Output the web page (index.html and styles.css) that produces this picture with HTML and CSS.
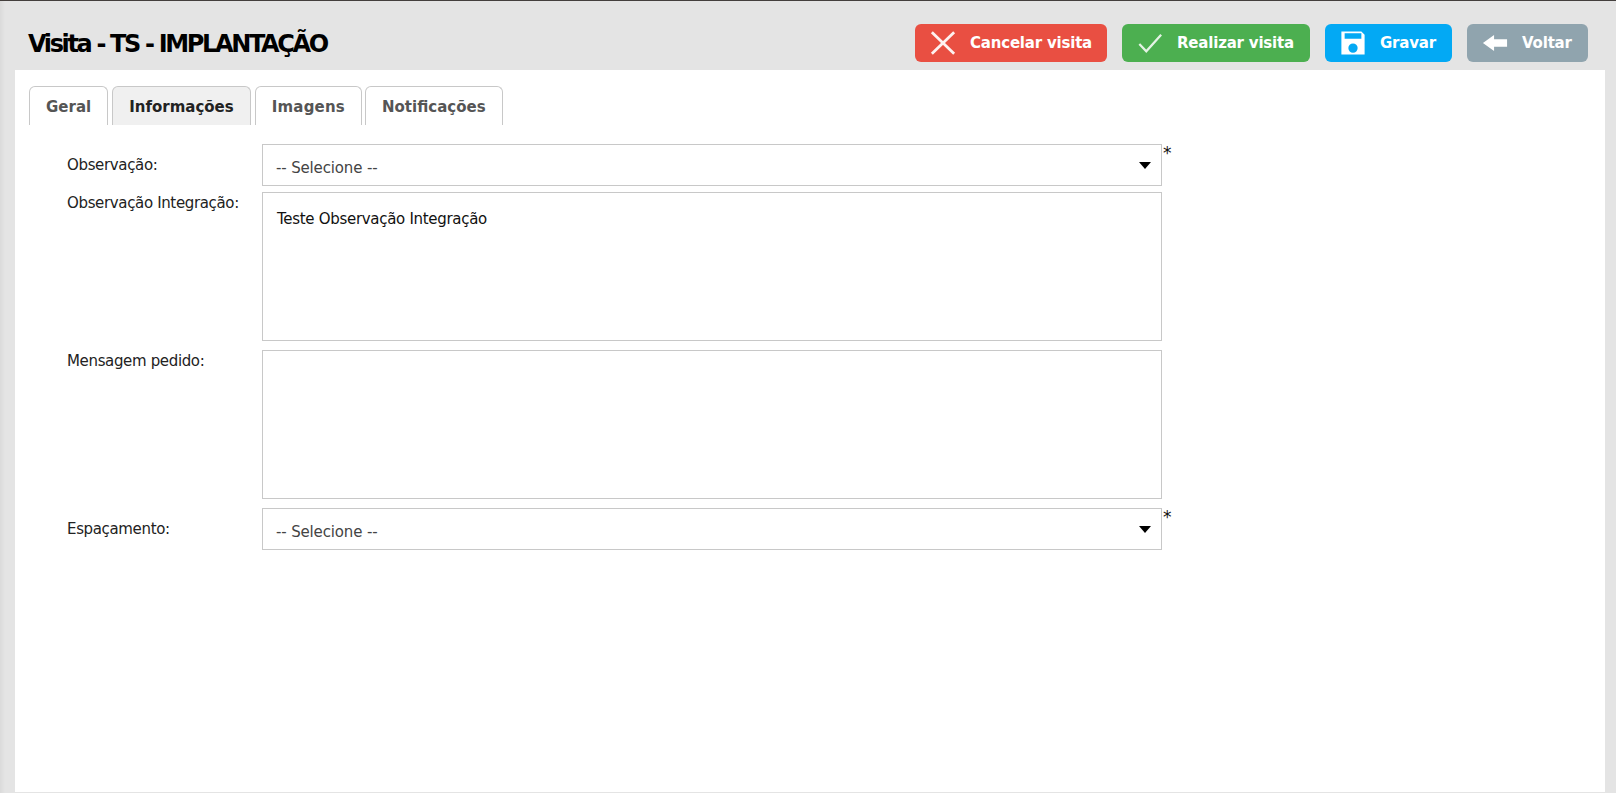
FILE: index.html
```html
<!DOCTYPE html>
<html lang="pt-BR">
<head>
<meta charset="utf-8">
<title>Visita</title>
<link rel="stylesheet" href="styles.css">
</head>
<body>
<div class="shell">
  <header class="topbar">
    <h1 class="title">Visita - TS - IMPLANTAÇÃO</h1>
    <div class="actions">
      <button class="btn btn-red"><svg class="ico" viewBox="0 0 28 28"><path d="M2 2.500L26 25.500M26 2.500L2 25.500" stroke="#fff" stroke-width="3" fill="none" opacity=".92"/></svg><span>Cancelar visita</span></button>
      <button class="btn btn-green"><svg class="ico" viewBox="0 0 28 28"><path d="M2.500 15L10 23L26 5" stroke="#fff" stroke-width="2.400" fill="none" opacity=".85"/></svg><span>Realizar visita</span></button>
      <button class="btn btn-blue"><svg class="ico" viewBox="0 0 28 28"><path fill-rule="evenodd" fill="#fff" d="M1.500 1.500H23L26.500 5V26.500H1.500ZM5 3.500V9.500H23V3.500ZM14 14.500A5 5 0 1 0 14 24.500A5 5 0 1 0 14 14.500Z"/></svg><span>Gravar</span></button>
      <button class="btn btn-gray"><svg class="ico" viewBox="0 0 28 28"><path fill="#fff" d="M1 14L13 5.500V10H27V18H13V22.500Z"/></svg><span>Voltar</span></button>
    </div>
  </header>
  <main class="panel">
    <nav class="tabs">
      <a class="tab">Geral</a>
      <a class="tab tab-alt">Informações</a>
      <a class="tab tab-wide">Imagens</a>
      <a class="tab">Notificações</a>
    </nav>
    <form class="form">
      <div class="row">
        <label class="lbl">Observação:</label>
        <div class="select"><span>-- Selecione --</span><i class="caret"></i></div>
        <span class="req">*</span>
      </div>
      <div class="row row-first">
        <label class="lbl lbl-top">Observação Integração:</label>
        <div class="area">Teste Observação Integração</div>
      </div>
      <div class="row row-gap">
        <label class="lbl lbl-top">Mensagem pedido:</label>
        <div class="area"></div>
      </div>
      <div class="row row-gap">
        <label class="lbl">Espaçamento:</label>
        <div class="select"><span>-- Selecione --</span><i class="caret"></i></div>
        <span class="req">*</span>
      </div>
    </form>
  </main>
</div>
</body>
</html>
```
FILE: styles.css
```css
* { box-sizing: border-box; }
html, body { margin: 0; height: 100%; }
body {
  background: linear-gradient(90deg, #dadada, #e4e4e4 5px);
  font-family: "DejaVu Sans", sans-serif;
  overflow: hidden;
}
.shell {
  height: 793px;
  border-top: 1px solid #443f3d;
  padding: 0 11px 1px 15px;
  display: flex;
  flex-direction: column;
}
.topbar {
  height: 69px;
  display: flex;
  align-items: flex-start;
  justify-content: space-between;
  padding: 23px 17px 0 13px;
}
.title {
  margin: 5px 0 0;
  font-size: 24px;
  line-height: 30px;
  font-weight: 700;
  letter-spacing: -2.35px;
  color: #000;
}
.actions { display: flex; gap: 15px; }
.btn {
  height: 38px;
  border: 0;
  border-radius: 6px;
  display: flex;
  align-items: center;
  gap: 14px;
  padding: 0 0 0 15px;
  color: #fff;
  font: 700 15px "DejaVu Sans", sans-serif;
  letter-spacing: -0.2px;
  white-space: nowrap;
}
.ico { width: 26px; height: 26px; flex: none; }
.btn-red { background: #e94f42; width: 192px; }
.btn-green { background: #4caf50; width: 188px; }
.btn-blue { background: #03a9f4; width: 127px; }
.btn-gray { background: #90a4ae; width: 121px; }
.panel {
  flex: 1;
  background: #fff;
  padding: 16px 14px 0;
}
.tabs { display: flex; gap: 4px; height: 39px; }
.tab {
  border: 1px solid #c8c8c8;
  border-bottom: 0;
  border-radius: 6px 6px 0 0;
  padding: 1px 16px 0;
  line-height: 38px;
  font-size: 15px;
  font-weight: 700;
  letter-spacing: 0;
  color: #555;
}
.tab-alt { background: #f0f0f0; color: #222; }
.tab-wide { letter-spacing: 0.2px; margin-right: -1px; }
.form { padding-top: 19px; }
.row { display: flex; align-items: flex-start; }
.row-gap { margin-top: 9px; }
.row-first { margin-top: 6px; }
.lbl {
  width: 233px;
  padding: 11px 0 0 38px;
  font-size: 15px;
  line-height: 20px;
  letter-spacing: -0.35px;
  color: #222;
  flex: none;
}
.lbl-top { padding-top: 1px; }
.select {
  width: 900px;
  height: 42px;
  border: 1px solid #c8c8c8;
  display: flex;
  align-items: center;
  justify-content: space-between;
  padding: 5px 10px 0 13px;
  font-size: 15px;
  letter-spacing: -0.15px;
  color: #444;
}
.caret {
  border-left: 6px solid transparent;
  border-right: 6px solid transparent;
  border-top: 7px solid #000;
  margin-top: -5px;
}
.req { font-size: 17px; line-height: 18px; margin: 0 0 0 1px; color: #111; }
.area {
  width: 900px;
  height: 149px;
  border: 1px solid #c8c8c8;
  padding: 16px 14px;
  font-size: 15px;
  line-height: 20px;
  letter-spacing: -0.3px;
  color: #111;
}
```
